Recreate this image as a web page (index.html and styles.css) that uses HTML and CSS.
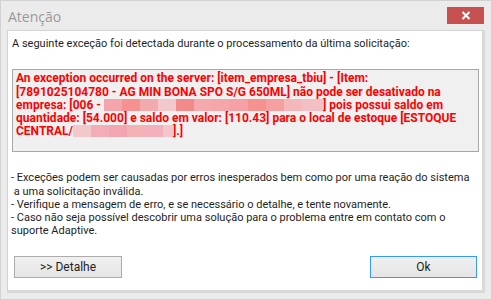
FILE: index.html
```html
<!DOCTYPE html>
<html lang="pt-BR">
<head>
    <meta charset="UTF-8">
    <title>Atenção</title>
    <link rel="stylesheet" href="styles.css">
</head>
<body>
    <!-- janela de erro -->
    <div class="window">
        <div class="titlebar">
            <span class="title">Atenção</span>
            <button class="close" title="Fechar">
                <svg width="10" height="9" viewBox="0 0 10 9">
                    <path d="M1.5 1 L8.5 8 M8.5 1 L1.5 8" stroke="#fff" stroke-width="2"/>
                </svg>
            </button>
        </div>

        <div class="panel">
            <p class="intro">A seguinte exceção foi detectada durante o processamento da última solicitação:</p>

            <div class="error-box">
                An exception occurred on the server: [item_empresa_tbiu] - [Item:<br>
                [7891025104780 - AG MIN BONA SPO S/G 650ML] não pode ser desativado na<br>
                empresa: [006 - <span class="redact redact-long"></span>] pois possui saldo em<br>
                quantidade: [54.000] e saldo em valor: [110.43] para o local de estoque [ESTOQUE<br>
                CENTRAL/<span class="redact redact-short"></span>].]
            </div>

            <div class="hints">
                <p>- Exceções podem ser causadas por erros inesperados bem como por uma reação do sistema<br>&nbsp;a uma solicitação inválida.</p>
                <p>- Verifique a mensagem de erro, e se necessário o detalhe, e tente novamente.</p>
                <p>- Caso não seja possível descobrir uma solução para o problema entre em contato com o<br>suporte Adaptive.</p>
            </div>

            <div class="actions">
                <button class="btn">&gt;&gt; Detalhe</button>
                <button class="btn btn-ok">Ok</button>
            </div>
        </div>
    </div>
</body>
</html>
```

FILE: styles.css
```css
/* base */
* {
    margin: 0;
    padding: 0;
    box-sizing: border-box;
}

body {
    font-family: Roboto, "Liberation Sans", sans-serif;
    font-size: 11px;
    color: #1e1e1e;
    background-color: #e9e9e9;
}

/* janela */
.window {
    width: 492px;
    height: 300px;
    display: flex;
    flex-direction: column;
    background-color: #ebebeb;
    border: 1px solid #d2d2d2;
}

.titlebar {
    height: 29px;
    display: flex;
    align-items: flex-start;
    justify-content: space-between;
}

.title {
    margin: 6px 0 0 7px;
    font-family: "Open Sans", sans-serif;
    font-size: 14px;
    color: #9a9a9a;
}

.close {
    width: 37px;
    height: 17px;
    margin: 6px 7px 0 0;
    border: none;
    background-color: #c75050;
    display: flex;
    align-items: center;
    justify-content: center;
}

/* conteúdo */
.panel {
    flex: 1;
    margin: 0 6px 6px 6px;
    background-color: #fff;
    border-top: 1px solid #d4d4d4;
    border-left: 1px solid #d4d4d4;
    border-right: 3px solid #d9d9d9;
    border-bottom: 3px solid #d9d9d9;
    display: flex;
    flex-direction: column;
}

.intro {
    margin: 6px 0 0 4px;
    line-height: 13.3px;
    white-space: nowrap;
}

.error-box {
    height: 83px;
    margin: 19px 3px 0 4px;
    padding: 2px 3px;
    background-color: #f0f0f0;
    border: 1px solid #a8a8a8;
    color: #ff0000;
    font-size: 12px;
    font-weight: bold;
    line-height: 13.3px;
    white-space: nowrap;
}

.redact {
    display: inline-block;
    height: 12px;
    vertical-align: -2px;
}

.redact-long {
    width: 219px;
    background: linear-gradient(90deg,
        #f4a4ab 0 18px, #f59290 18px 36px, #f3aaae 36px 54px, #f3c8cc 54px 72px,
        #f18a88 72px 90px, #f4a9ac 90px 108px, #f4a6ab 108px 126px, #f5a0a4 126px 144px,
        #f6928e 144px 162px, #f5a0a0 162px 180px, #f4b8ba 180px 198px, #f2c0c4 198px 219px);
}

.redact-short {
    width: 100px;
    background: linear-gradient(90deg,
        #f3c8cb 0 18px, #f2adb9 18px 36px, #f3a6b0 36px 54px, #f4b2b6 54px 72px,
        #f4b0bc 72px 90px, #f3c6cc 90px 100px);
}

.hints {
    margin: 19px 0 0 3px;
    line-height: 13.3px;
    white-space: nowrap;
}

/* botões */
.actions {
    margin: auto 5px 12px 6px;
    display: flex;
    justify-content: space-between;
}

.btn {
    width: 108px;
    height: 22px;
    font-family: Roboto, "Liberation Sans", sans-serif;
    font-size: 12px;
    color: #1e1e1e;
    background: linear-gradient(#f0f0f0, #e5e5e5);
    border: 1px solid #acacac;
}

.btn-ok {
    width: 107px;
    border-color: #3399ff;
}
```
